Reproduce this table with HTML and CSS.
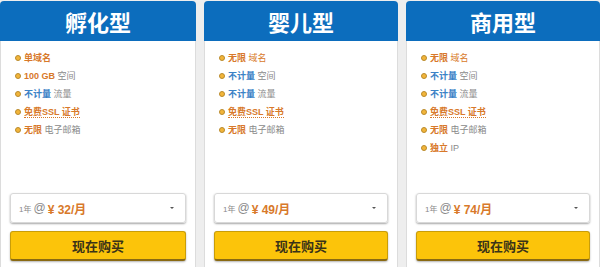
FILE: index.html
```html
<!DOCTYPE html>
<html lang="zh-CN">
<head>
    <meta charset="UTF-8">
    <meta name="viewport" content="width=device-width, initial-scale=1.0">
    <title>主机方案</title>
    <link rel="stylesheet" href="styles.css">
</head>
<body>
    <div class="plans">
        <div class="plan">
            <header class="plan-title">孵化型</header>
            <ul class="features">
                <li><b class="hl">单域名</b></li>
                <li><b class="hl">100 GB</b> 空间</li>
                <li><b class="blue">不计量</b> 流量</li>
                <li><b class="hl dotted">免费SSL 证书</b></li>
                <li><b class="hl">无限</b> 电子邮箱</li>
            </ul>
            <div class="term">
                <span class="term-len">1年</span> <span class="at">@</span>
                <span class="price">¥ 32/月</span>
                <span class="caret"></span>
            </div>
            <button class="buy" type="button">现在购买</button>
        </div>

        <div class="plan">
            <header class="plan-title">婴儿型</header>
            <ul class="features">
                <li><b class="hl">无限</b> <span class="hl">域名</span></li>
                <li><b class="blue">不计量</b> 空间</li>
                <li><b class="blue">不计量</b> 流量</li>
                <li><b class="hl dotted">免费SSL 证书</b></li>
                <li><b class="hl">无限</b> 电子邮箱</li>
            </ul>
            <div class="term">
                <span class="term-len">1年</span> <span class="at">@</span>
                <span class="price">¥ 49/月</span>
                <span class="caret"></span>
            </div>
            <button class="buy" type="button">现在购买</button>
        </div>

        <div class="plan">
            <header class="plan-title">商用型</header>
            <ul class="features">
                <li><b class="hl">无限</b> <span class="hl">域名</span></li>
                <li><b class="blue">不计量</b> 空间</li>
                <li><b class="blue">不计量</b> 流量</li>
                <li><b class="hl dotted">免费SSL 证书</b></li>
                <li><b class="hl">无限</b> 电子邮箱</li>
                <li><b class="hl">独立</b> IP</li>
            </ul>
            <div class="term">
                <span class="term-len">1年</span> <span class="at">@</span>
                <span class="price">¥ 74/月</span>
                <span class="caret"></span>
            </div>
            <button class="buy" type="button">现在购买</button>
        </div>
    </div>
</body>
</html>
```

FILE: styles.css
```css
body {
    margin: 0;
    background-color: #eeeeee;
    font-family: 'Liberation Sans', 'Noto Sans CJK SC', sans-serif;
}

.plans {
    display: grid;
    grid-template-columns: 196px 194px 194px;
    gap: 8px;
    padding-top: 1px;
}

.plan {
    background-color: #fff;
    border: 1px solid #dcdcdc;
    border-top: none;
    border-bottom: none;
    border-radius: 4px 4px 0 0;
    height: 266px;
    display: flex;
    flex-direction: column;
}

.plan-title {
    background-color: #0c6dbd;
    color: #fff;
    height: 40px;
    margin: 0 -1px;
    border-radius: 4px 4px 0 0;
    font-size: 22px;
    font-weight: bold;
    display: flex;
    align-items: center;
    justify-content: center;
}

.features {
    list-style: none;
    margin: 0;
    padding: 8px 0 0 14px;
    height: 144px;
    box-sizing: border-box;
}

.features li {
    height: 18px;
    line-height: 18px;
    font-size: 9px;
    color: #8a8a8a;
}

.features li::before {
    content: "";
    display: inline-block;
    vertical-align: middle;
    width: 4px;
    height: 4px;
    border-radius: 50%;
    background-color: #f2b53a;
    border: 1px solid #b98a2c;
    margin: -1px 3px 0 0;
}

.hl {
    color: #d8792a;
}

.blue {
    color: #3b82c6;
}

.dotted {
    border-bottom: 1px dotted #d8792a;
}

.term {
    margin: 8px 9px 0;
    height: 30px;
    box-sizing: border-box;
    border: 1px solid #d8d8d8;
    border-radius: 3px;
    box-shadow: 0 1px 2px rgba(0, 0, 0, 0.35);
    display: flex;
    align-items: center;
    padding: 0 8px;
    color: #8a8a8a;
}

.term-len {
    font-size: 8px;
}

.at {
    font-size: 12px;
    margin: 0 2px;
}

.price {
    font-size: 12px;
    font-weight: bold;
    color: #d8792a;
}

.caret {
    margin-left: auto;
    margin-right: 3px;
    border-left: 2px solid transparent;
    border-right: 2px solid transparent;
    border-top: 2px solid #555;
}

.buy {
    margin: 8px 9px 0;
    height: 30px;
    background-color: #fcc40a;
    border: 1px solid #c99d08;
    border-bottom: 2px solid #8a6a12;
    border-radius: 3px;
    box-shadow: 0 1px 2px rgba(0, 0, 0, 0.3);
    font-family: 'Noto Sans CJK SC', sans-serif;
    font-size: 13px;
    font-weight: bold;
    color: #3a3318;
    padding: 0;
}
```
